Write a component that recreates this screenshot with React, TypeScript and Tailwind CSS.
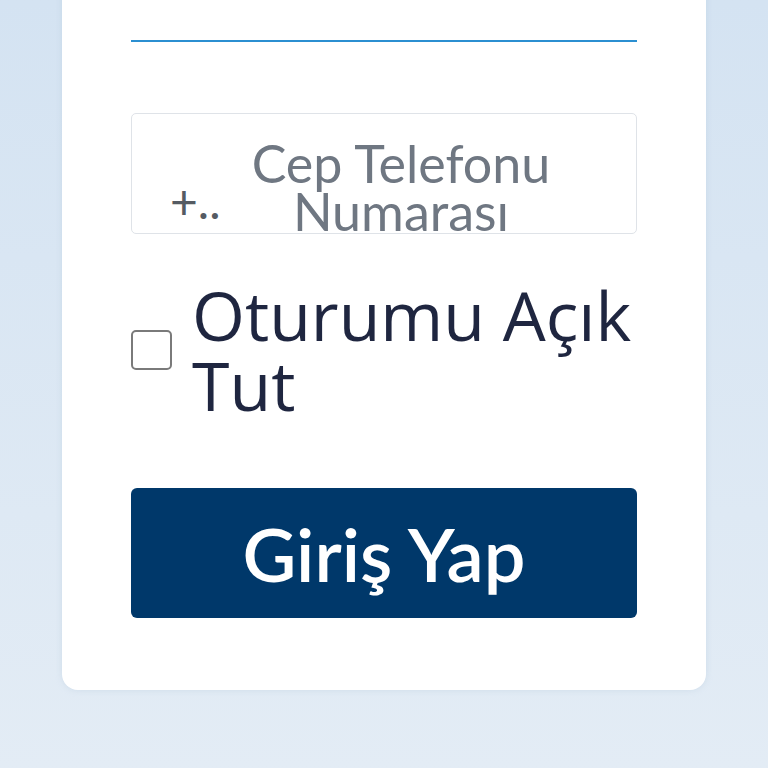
export default function App() {
  return (
    <div className="min-h-[768px] w-full bg-gradient-to-b from-[#d4e3f2] to-[#e3ecf5] flex justify-center items-start font-['Lato',sans-serif]">
      <div className="w-[644px] mt-[-40px] h-[730px] bg-white rounded-[16px] px-[69px] flex flex-col shadow-[0_0_6px_rgba(180,200,220,0.4)]">
        <div className="h-[82px] border-b-2 border-[#2b8fd1]" />
        <div className="mt-[71px] h-[121px] border border-[#dfe3e8] rounded-[5px] flex items-end overflow-hidden">
          <span className="ml-[38px] mb-[8px] text-[48px] leading-none text-[#555b63] w-[70px] shrink-0">+..</span>
          <span className="flex-1 pr-[74px] text-center text-[52px] leading-[48px] text-[#6f7782] mb-[-2px] whitespace-nowrap">
            Cep Telefonu
            <br />
            Numarası
          </span>
        </div>
        <label className="mt-[46px] flex items-center gap-[20px]">
          <span className="w-[41px] h-[40px] shrink-0 border-2 border-[#7a7a7a] rounded-[5px]" />
          <span className="font-['Open_Sans',sans-serif] text-[68px] leading-[70px] text-[#1f2640]">
            Oturumu Açık Tut
          </span>
        </label>
        <button className="mt-[68px] h-[130px] w-full bg-[#00386a] rounded-[6px] text-white text-[74px] font-semibold">
          Giriş Yap
        </button>
      </div>
    </div>
  );
}
